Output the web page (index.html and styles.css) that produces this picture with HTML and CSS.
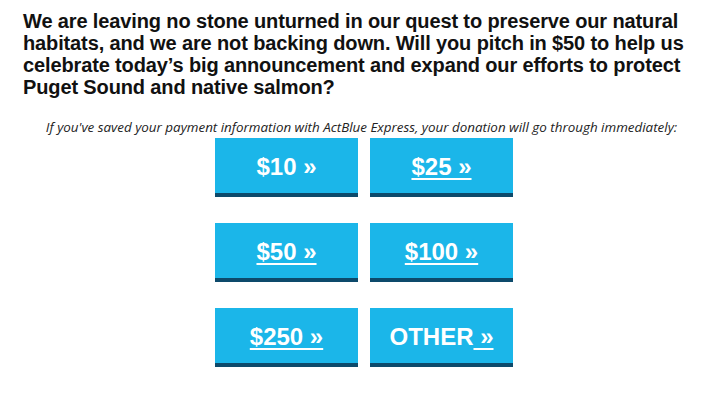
FILE: index.html
```html
<!DOCTYPE html>
<html>
<head>
<meta charset="utf-8">
<link rel="stylesheet" href="styles.css">
</head>
<body>
<div class="page">
  <p class="lead">We are leaving no stone unturned in our quest to preserve our natural habitats, and we are not backing down. Will you pitch in $50 to help us celebrate today’s big announcement and expand our efforts to protect Puget Sound and native salmon?</p>
  <p class="note">If you've saved your payment information with ActBlue Express, your donation will go through immediately:</p>
  <div class="grid">
    <a class="btn plain" href="#"><span>$10 »</span></a>
    <a class="btn" href="#"><span>$25 »</span></a>
    <a class="btn" href="#"><span>$50 »</span></a>
    <a class="btn" href="#"><span>$100 »</span></a>
    <a class="btn" href="#"><span>$250 »</span></a>
    <a class="btn plain" href="#"><span>OTHER<span class="u"> »</span></span></a>
  </div>
</div>
</body>
</html>
```
FILE: styles.css
```css
html, body {
  margin: 0;
  padding: 0;
  background: #ffffff;
}
.page {
  padding: 10px 0 0 23px;
  width: 682px;
}
.lead {
  margin: 0;
  font-family: "Liberation Sans", Arial, sans-serif;
  font-weight: bold;
  font-size: 20px;
  line-height: 22px;
  letter-spacing: -0.13px;
  color: #111111;
  width: 670px;
}
.note {
  margin: 20px 0 0 0;
  padding-right: 5px;
  font-family: "Open Sans", sans-serif;
  font-style: italic;
  font-size: 13.4px;
  line-height: 18px;
  color: #222222;
  text-align: center;
  white-space: nowrap;
}
.grid {
  display: grid;
  grid-template-columns: 143px 143px;
  column-gap: 12px;
  row-gap: 26px;
  justify-content: center;
  margin-top: 2px;
}
.btn {
  display: flex;
  align-items: center;
  justify-content: center;
  box-sizing: border-box;
  height: 59px;
  padding-top: 3px;
  border-bottom: 4px solid #0d4a6b;
  background: #1bb6e9;
  color: #ffffff;
  font-family: "Liberation Sans", Arial, sans-serif;
  font-weight: bold;
  font-size: 24px;
  text-decoration: underline;
  text-decoration-thickness: 2px;
  text-underline-offset: 3px;
}
.btn.plain {
  text-decoration: none;
}
.btn .u {
  text-decoration: underline;
  text-decoration-thickness: 2px;
  text-underline-offset: 3px;
}
```
